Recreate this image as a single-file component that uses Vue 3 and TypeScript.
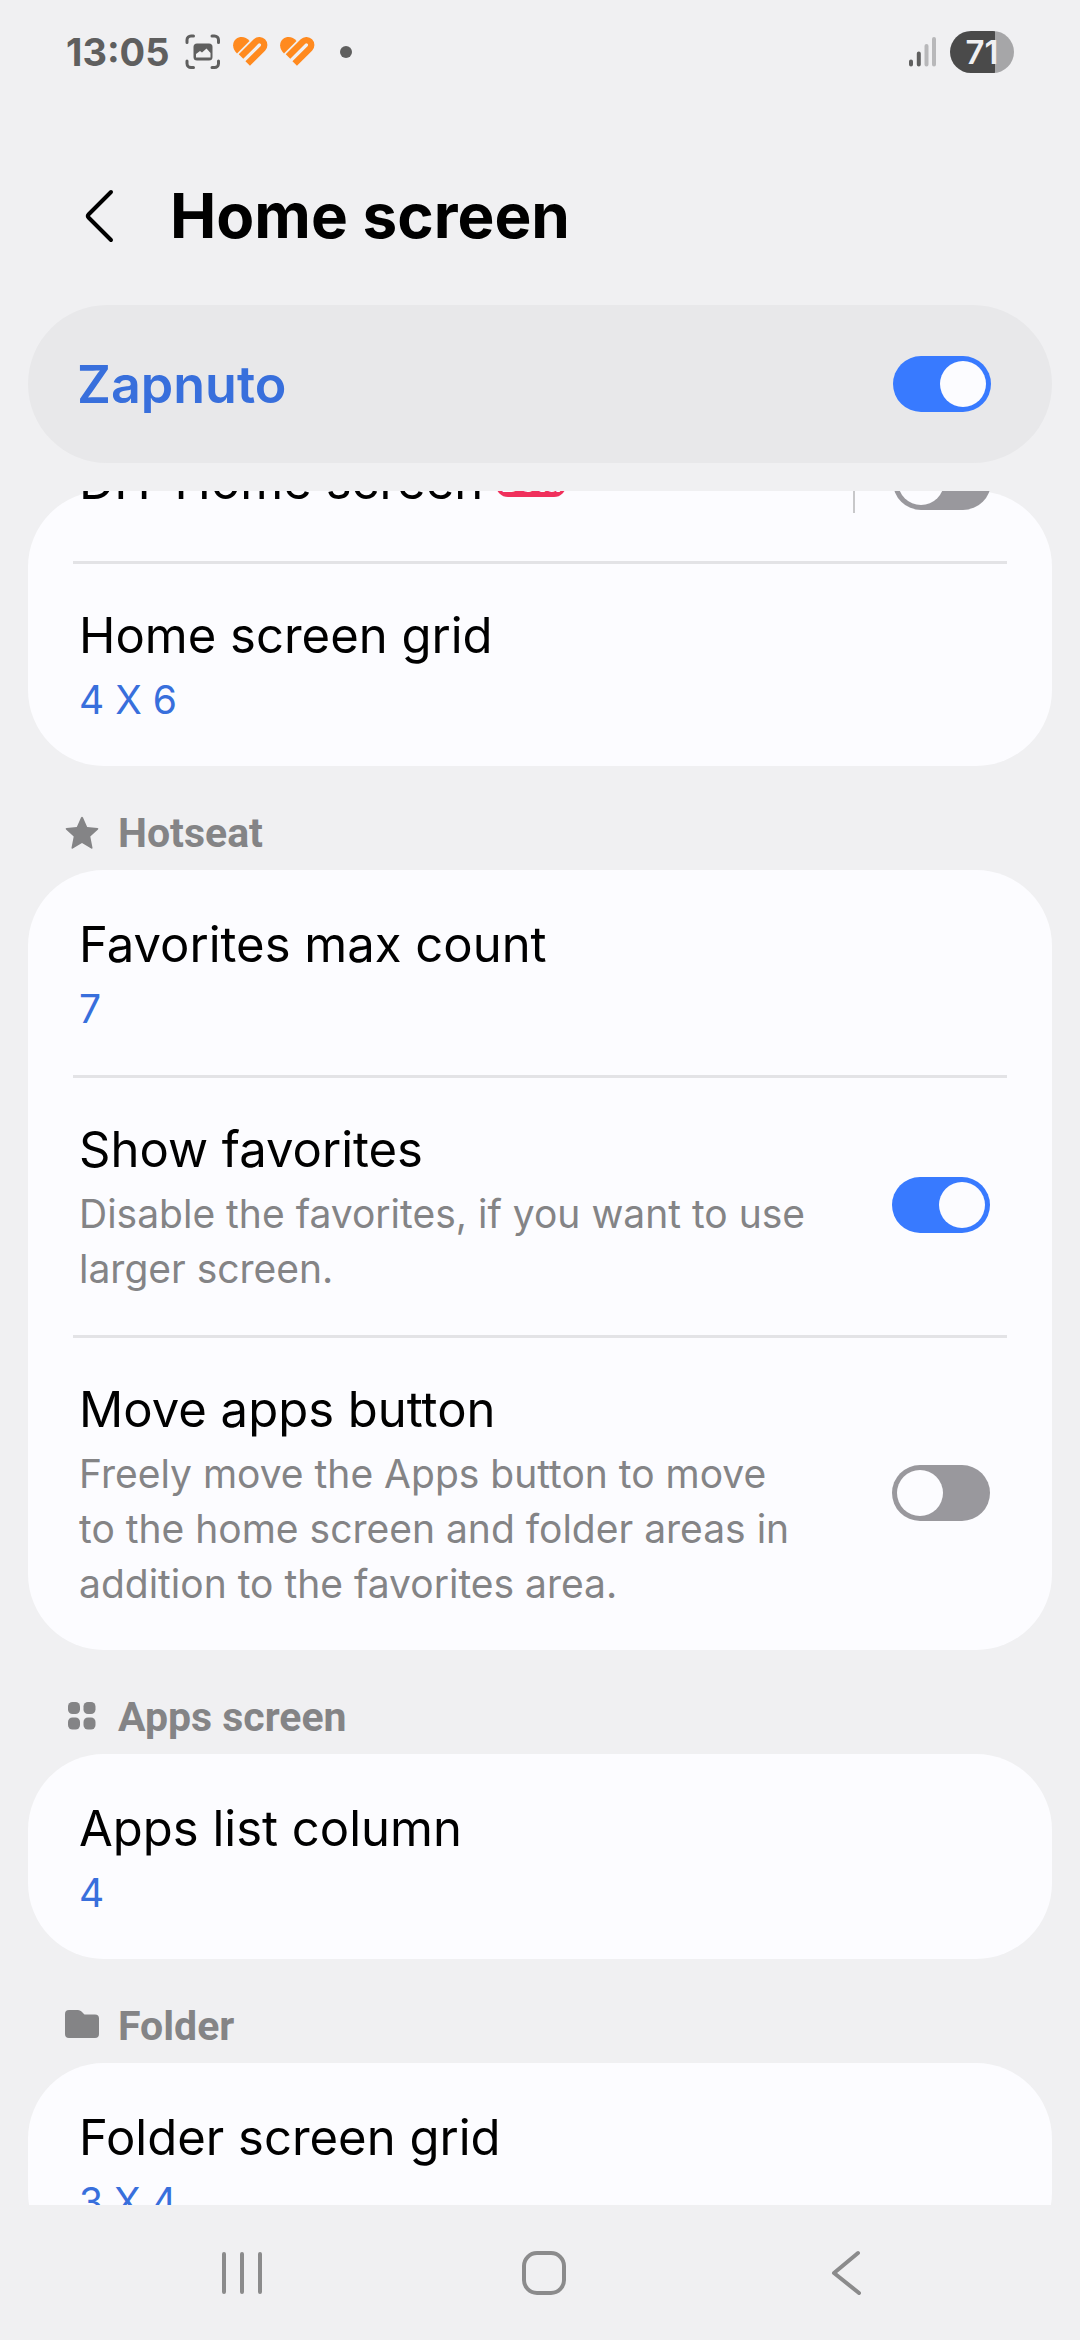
<script setup lang="ts">
import { ref } from 'vue'

interface Item {
  id: string
  title: string
  value?: string
  text?: string
  toggle?: boolean
  badge?: string
}

interface Section {
  icon?: 'star' | 'apps' | 'folder'
  label?: string
  items: Item[]
}

const enabled = ref(true)

const sections = ref<Section[]>([
  {
    items: [
      { id: 'diy', title: 'DIY Home screen', badge: 'Beta', toggle: false },
      { id: 'grid', title: 'Home screen grid', value: '4 X 6' },
    ],
  },
  {
    icon: 'star',
    label: 'Hotseat',
    items: [
      { id: 'max', title: 'Favorites max count', value: '7' },
      {
        id: 'show',
        title: 'Show favorites',
        text: 'Disable the favorites, if you want to use larger screen.',
        toggle: true,
      },
      {
        id: 'move',
        title: 'Move apps button',
        text: 'Freely move the Apps button to move to the home screen and folder areas in addition to the favorites area.',
        toggle: false,
      },
    ],
  },
  { icon: 'apps', label: 'Apps screen', items: [{ id: 'column', title: 'Apps list column', value: '4' }] },
  { icon: 'folder', label: 'Folder', items: [{ id: 'folder', title: 'Folder screen grid', value: '3 X 4' }] },
])
</script>

<template>
  <div class="screen">
    <div class="status">
      <span class="time">13:05</span>
      <svg class="capture" viewBox="0 0 36 36" aria-hidden="true">
        <path
          d="M2 8.500V6a4 4 0 0 1 4-4H8.500M27 2h2.500a4 4 0 0 1 4 4v2.500M33.500 27v2.500a4 4 0 0 1-4 4H27M8.500 33.500H6a4 4 0 0 1-4-4V27"
          fill="none"
          stroke="#5f5f5f"
          stroke-width="3"
          stroke-linecap="round"
        />
        <rect x="8.500" y="9.500" width="19" height="17" rx="3.500" fill="#5f5f5f" />
        <path d="M11 20l4-3 2 1.500 4.500-4 4 4.500V23.500H11z" fill="#f0f0f2" />
      </svg>
      <svg v-for="n in 2" :key="n" class="heart" viewBox="0 0 35 30" aria-hidden="true">
        <path d="M4 16.500C-1 12-1 5 3 2C7-1 13-.5 16.500 4z" fill="#ff8a1f" />
        <path d="M8 19.600L23 4.600A4.800 4.800 0 0 1 29.800 11.400L14.700 26.500" fill="none" stroke="#ff8a1f" stroke-width="6.400" />
      </svg>
      <span class="dot"></span>
      <svg class="signal" viewBox="0 0 28 30" aria-hidden="true">
        <g stroke-width="4" stroke-linecap="round">
          <path d="M2 24.500v3M9.800 16.500v11" stroke="#5f5f5f" />
          <path d="M17.500 9v18.500M25 2v25.500" stroke="#b8b8ba" />
        </g>
      </svg>
      <span class="battery">71</span>
    </div>

    <header class="header">
      <button class="back" type="button" aria-label="Back">
        <svg viewBox="0 0 30 54" aria-hidden="true">
          <path d="M27 3L4.500 25.500q-1.500 1.500 0 3L27 51" fill="none" stroke="#000" stroke-width="4" stroke-linecap="round" />
        </svg>
      </button>
      <h1>Home screen</h1>
    </header>

    <label class="master">
      <span>Zapnuto</span>
      <input v-model="enabled" class="switch" type="checkbox" role="switch" />
    </label>

    <main class="list">
      <section v-for="(section, i) in sections" :key="i" :class="{ scrolled: i === 0 }">
        <h2 v-if="section.label" class="label">
          <svg viewBox="0 0 34 34" aria-hidden="true" fill="#848486">
            <path
              v-if="section.icon === 'star'"
              d="M16 1.600q1-1.600 2 0l4.200 9.400 10.300 1q1.500.300.500 1.500l-7.700 7 2.200 11.200q.100 1.600-1.300.900L17 27l-9.200 5.600q-1.400.700-1.300-.900l2.200-11.200-7.700-7q-1-1.200.500-1.500l10.300-1z"
            />
            <template v-else-if="section.icon === 'apps'">
              <rect x="3" y="2" width="12" height="12" rx="4.500" />
              <rect x="18.500" y="2" width="12" height="12" rx="4.500" />
              <rect x="3" y="17.500" width="12" height="12" rx="4.500" />
              <rect x="18.500" y="17.500" width="12" height="12" rx="4.500" />
            </template>
            <path
              v-else
              d="M4 1h9q2 0 3.500 1.500l3 3H30q4 0 4 4V25q0 4-4 4H4q-4 0-4-4V5q0-4 4-4z"
            />
          </svg>
          {{ section.label }}
        </h2>
        <div class="card">
          <component
            :is="item.toggle === undefined ? 'button' : 'label'"
            v-for="item in section.items"
            :key="item.id"
            class="row"
            :class="{ single: !item.value && !item.text }"
          >
            <span class="body">
              <span class="title">{{ item.title }}<span v-if="item.badge" class="badge">{{ item.badge }}</span></span>
              <span v-if="item.value" class="value">{{ item.value }}</span>
              <span v-if="item.text" class="text">{{ item.text }}</span>
            </span>
            <span v-if="item.badge" class="split"></span>
            <input v-if="item.toggle !== undefined" v-model="item.toggle" class="switch" type="checkbox" role="switch" />
          </component>
        </div>
      </section>
    </main>

    <nav class="nav">
      <button type="button" aria-label="Recent apps">
        <svg viewBox="0 0 46 46" aria-hidden="true">
          <path d="M5 4v38M23 4v38M41 4v38" />
        </svg>
      </button>
      <button type="button" aria-label="Home">
        <svg viewBox="0 0 46 46" aria-hidden="true">
          <rect x="3" y="3" width="40" height="40" rx="13" />
        </svg>
      </button>
      <button type="button" aria-label="Back">
        <svg viewBox="0 0 46 46" aria-hidden="true">
          <path d="M36 3L12 23l25 20" />
        </svg>
      </button>
    </nav>
  </div>
</template>

<style>
body {
  background: #f0f0f2;
}
</style>

<style scoped>
.screen {
  display: flex;
  flex-direction: column;
  height: 100vh;
  overflow: hidden;
  background: #f0f0f2;
  color: #000;
  font-family: Inter, 'Noto Sans', sans-serif;
}

button {
  border: 0;
  padding: 0;
  background: none;
  color: inherit;
  font: inherit;
  text-align: left;
}

.status {
  display: flex;
  align-items: center;
  flex: none;
  height: 104px;
  padding: 0 66px;
  color: #5f5f5f;
}

.time {
  width: 104px;
  margin-right: 15px;
  font-size: 38px;
  font-weight: 700;
  line-height: 48px;
}

.capture {
  width: 36px;
  height: 36px;
  margin-right: 12px;
}

.heart {
  width: 35px;
  height: 30px;
  margin-right: 12px;
}

.dot {
  width: 12px;
  height: 12px;
  margin-left: 13px;
  border-radius: 50%;
  background: #5f5f5f;
}

.signal {
  width: 28px;
  height: 30px;
  margin-left: auto;
}

.battery {
  width: 64px;
  height: 42px;
  margin-left: 13px;
  border-radius: 21px;
  background: linear-gradient(90deg, #4a4a4a 70%, #a6a6a8 70%);
  color: #f0f0f2;
  font-size: 33px;
  font-weight: 600;
  line-height: 42px;
  text-align: center;
}

.header {
  display: flex;
  align-items: center;
  flex: none;
  box-sizing: border-box;
  height: 201px;
  padding: 22px 84px 0;
}

.back {
  display: flex;
  width: 86px;
}

.back svg {
  width: 30px;
  height: 54px;
}

h1 {
  margin: 0;
  font-size: 62px;
  font-weight: 700;
  line-height: 78px;
}

.master {
  display: flex;
  align-items: center;
  justify-content: space-between;
  flex: none;
  height: 158px;
  margin: 0 28px 28px;
  padding: 0 61px 0 49px;
  border-radius: 79px;
  background: #e8e8ea;
  color: #386fdc;
  font-size: 52px;
  font-weight: 600;
}

.switch {
  appearance: none;
  display: flex;
  flex: none;
  width: 98px;
  height: 56px;
  margin: 0;
  padding: 5px;
  box-sizing: border-box;
  border-radius: 28px;
  background: #99989d;
}

.switch::before {
  content: '';
  width: 46px;
  height: 46px;
  border-radius: 50%;
  background: #fcfcff;
}

.switch:checked {
  justify-content: flex-end;
  background: #387aff;
}

.list {
  flex: 1;
  min-height: 0;
  overflow: hidden;
}

.label {
  display: flex;
  align-items: center;
  gap: 19px;
  margin: 0;
  padding: 39px 65px 9px;
  color: #848486;
  font-family: Roboto, sans-serif;
  font-size: 41px;
  font-weight: 700;
  line-height: 56px;
}

.label svg {
  width: 34px;
  height: 34px;
}

.card {
  margin: 0 28px;
  border-radius: 76px;
  background: #fcfcff;
}

/* The list is scrolled part of the way past its first row. */
.scrolled .row:first-child {
  margin-top: -88px;
}

.scrolled .card {
  display: flow-root;
}

.row {
  position: relative;
  display: flex;
  align-items: center;
  width: 100%;
  box-sizing: border-box;
  padding: 39px 62px 39px 51px;
}

.row.single {
  padding: 46px 61px 46px 51px;
}

.row + .row::before {
  content: '';
  position: absolute;
  top: 0;
  left: 45px;
  right: 45px;
  height: 3px;
  background: #e3e3e6;
}

.body {
  display: flex;
  flex: 1;
  flex-direction: column;
  gap: 3px;
  padding: 3px 84px 0 0;
}

.single .body {
  padding: 0;
}

.title {
  display: flex;
  align-items: center;
  font-size: 49px;
  line-height: 66px;
}

.badge {
  width: 70px;
  margin-left: 13px;
  border-radius: 12px;
  background: #f0305c;
  color: #fcfcff;
  font-size: 28px;
  font-weight: 600;
  line-height: 30px;
  text-align: center;
}

.value,
.text {
  color: #848486;
  font-size: 39px;
  line-height: 55px;
}

.value {
  color: #386fdc;
}

.split {
  width: 2px;
  height: 62px;
  margin-right: 38px;
  background: #c8c8ca;
}

.nav {
  display: flex;
  flex: none;
  height: 135px;
  padding: 0 84px 0 91px;
}

.nav button {
  display: flex;
  flex: 1;
  align-items: center;
  justify-content: center;
}

.nav svg {
  width: 46px;
  height: 46px;
  fill: none;
  stroke: #8b8b8c;
  stroke-width: 4;
  stroke-linecap: round;
  stroke-linejoin: round;
}
</style>
